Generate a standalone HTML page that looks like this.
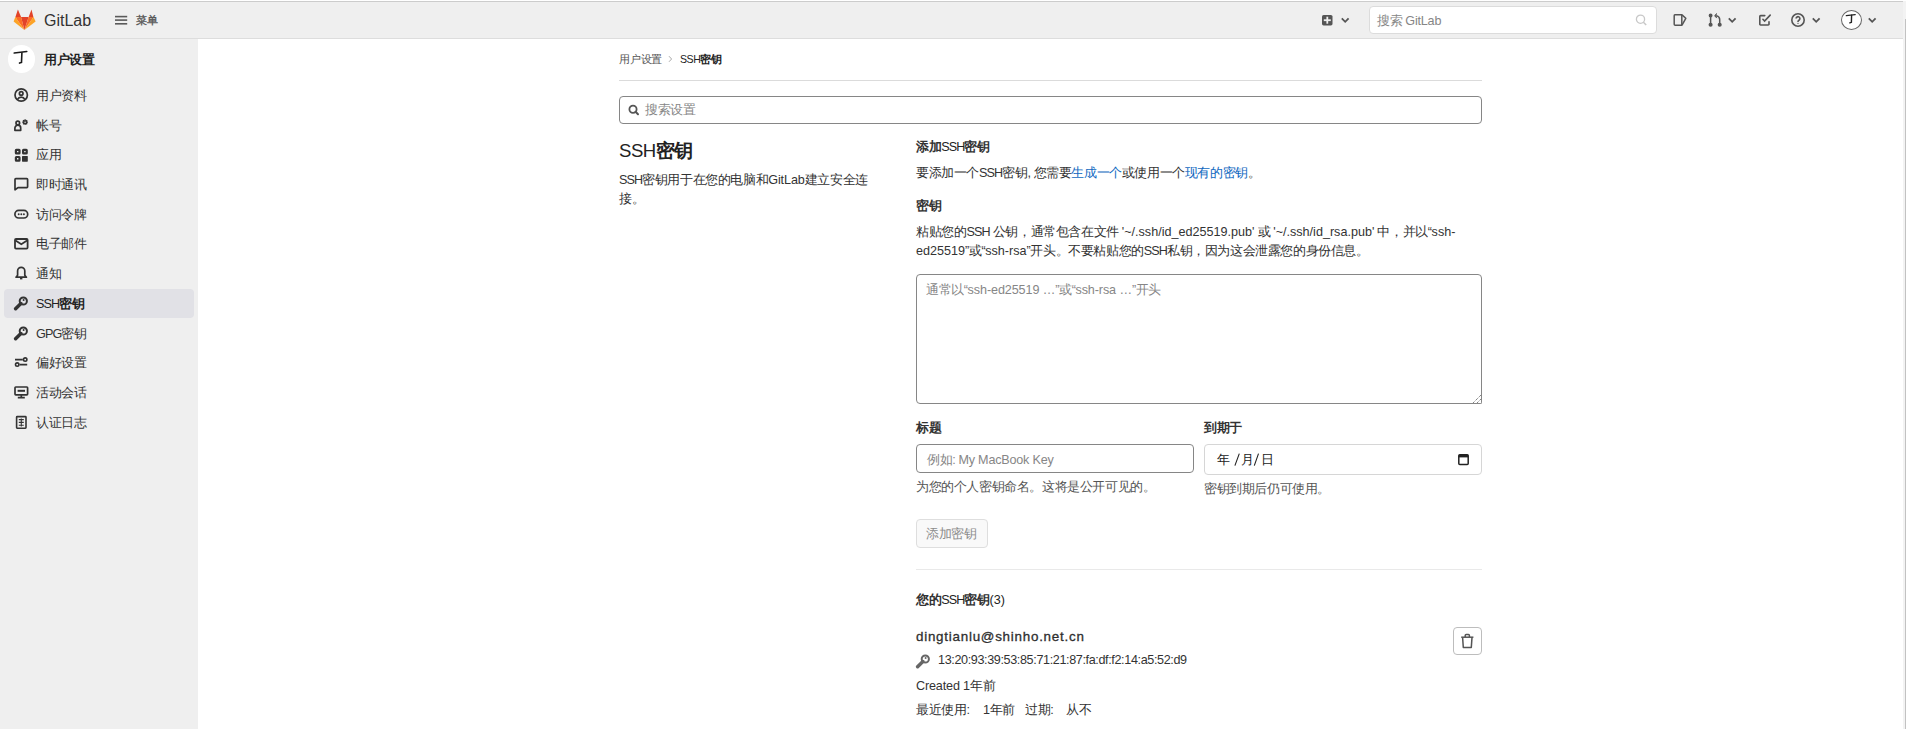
<!DOCTYPE html>
<html><head><meta charset="utf-8">
<style>
*{box-sizing:border-box;margin:0;padding:0}
html,body{width:1906px;height:729px;overflow:hidden;background:#fff}
body{font-family:"Liberation Sans",sans-serif;color:#303030;position:relative}
.a{position:absolute;white-space:nowrap}
svg{display:block}
#header{left:0;top:1px;width:1903px;height:38px;background:#efefef;border-bottom:1px solid #dddddd;border-top:1px solid #cccccc}
#sidebar{left:0;top:39px;width:198px;height:690px;background:#efefef}
.nav{left:4px;width:190px;height:29px;border-radius:4px}
.nav.act{background:#e1e1e6}
.nt{left:36px;font-size:12.6px;line-height:16px;color:#333;letter-spacing:-0.4px}
.t13{font-size:12.6px;line-height:19px;color:#333;letter-spacing:-0.4px}
.b{font-weight:bold}
.L{letter-spacing:-0.9px}
.l{letter-spacing:-0.1px}
.l0{letter-spacing:0}
.dt{top:451px;font-size:12.6px;line-height:18px;color:#222}
.lnk{color:#1068bf}
.inp{border:1px solid #868686;border-radius:4px;background:#fff}
.ph{color:#868686;font-size:12.6px;line-height:18px;letter-spacing:-0.4px}
.ic{fill:none;stroke:#333}
</style></head><body>
<div class="a" id="header"></div>
<!-- logo -->
<svg class="a" style="left:0;top:0" width="40" height="36" viewBox="0 0 40 36">
<path fill="#E24329" d="M15.4 17.1L17.9 9.4L21.1 17.1z"/>
<path fill="#E24329" d="M28.6 17.1L31.5 9.4L33.4 17.1z"/>
<path fill="#E24329" d="M21 17.1H28.7L24.4 29.9z"/>
<path fill="#FC6D26" d="M15.2 17.1H21.1L24.4 29.9z"/>
<path fill="#FC6D26" d="M33.6 17.1H28.6L24.4 29.9z"/>
<path fill="#FCA326" d="M15.3 17.1L13.6 21.6L24.4 29.9z"/>
<path fill="#FCA326" d="M33.5 17.1L35.6 21.6L24.4 29.9z"/>
</svg>
<div class="a" style="left:44px;top:11px;font-size:16px;line-height:20px;color:#333">GitLab</div>
<svg class="a" style="left:115px;top:15px" width="13" height="10" viewBox="0 0 13 10" fill="#5a5a5a"><rect x="0" y="0.8" width="12.2" height="1.6"/><rect x="0" y="4.3" width="12.2" height="1.6"/><rect x="0" y="8" width="12.2" height="1.6"/></svg>
<div class="a" style="left:136px;top:12px;font-size:10.6px;line-height:16px;color:#555;-webkit-text-stroke:0.35px #555">菜单</div>

<!-- header right -->
<svg class="a" style="left:1321px;top:14px" width="13" height="12" viewBox="0 0 13 12"><rect x="1" y="0.9" width="10.5" height="10.5" rx="1.6" fill="#555"/><rect x="5.4" y="2.7" width="1.8" height="7" fill="#efefef"/><rect x="2.8" y="5.3" width="7" height="1.8" fill="#efefef"/></svg>
<svg class="a" style="left:1340px;top:17px" width="10" height="7" viewBox="0 0 10 7"><path d="M1.8 1.4l3.4 3.4 3.4-3.4" stroke="#555" stroke-width="1.8" fill="none"/></svg>
<div class="a" style="left:1369px;top:6px;width:288px;height:28px;background:#fff;border:1px solid #dcdcdc;border-radius:4px"></div>
<div class="a" style="left:1377px;top:12.5px;font-size:12.6px;line-height:16px;color:#868686;letter-spacing:-0.4px">搜索 <span style="letter-spacing:-0.2px">GitLab</span></div>
<svg class="a" style="left:1634px;top:13px" width="14" height="14" viewBox="0 0 14 14"><circle cx="6.5" cy="6.2" r="4.1" stroke="#c8c8c8" stroke-width="1.3" fill="none"/><path d="M9.4 9.2l2.8 2.8" stroke="#c8c8c8" stroke-width="1.5"/></svg>
<!-- issues -->
<svg class="a" style="left:1672px;top:12px" width="16" height="16" viewBox="0 0 16 16" fill="none" stroke="#555" stroke-width="1.5" stroke-linejoin="round"><path d="M3 2.8h6.8v10.4H3.2A1 1 0 0 1 2.2 12.2V3.8A1 1 0 0 1 3 2.8z"/><path d="M10 2.9l3.8 3.4-3.8 6.9"/></svg>
<!-- MR -->
<svg class="a" style="left:1706px;top:12px" width="16" height="16" viewBox="0 0 16 16" fill="none" stroke="#555" stroke-width="1.5"><circle cx="4.6" cy="3.5" r="1.2" fill="#555"/><path d="M4.6 3.8v8.6"/><circle cx="4.6" cy="12.7" r="1.3" fill="#555"/><path d="M10.5 3.6c2.2.6 3.2 2 3.2 4v4.8"/><circle cx="13.7" cy="12.7" r="1.3" fill="#555"/><path d="M10.6 1.4l-1.9 2.5 2.1 2.2" fill="#555" stroke-width="1"/></svg>
<svg class="a" style="left:1727px;top:17px" width="10" height="7" viewBox="0 0 10 7"><path d="M1.8 1.4l3.4 3.4 3.4-3.4" stroke="#555" stroke-width="1.8" fill="none"/></svg>
<!-- todo -->
<svg class="a" style="left:1757px;top:12px" width="16" height="16" viewBox="0 0 16 16" fill="none" stroke="#555" stroke-width="1.6" stroke-linecap="round"><path d="M7.8 3.6H3.6a.8.8 0 0 0-.8.8v7.8a.8.8 0 0 0 .8.8h7.6a.8.8 0 0 0 .8-.8V9.7"/><path d="M5.9 7.3l1.7 1.8 5.6-6"/></svg>
<!-- help -->
<svg class="a" style="left:1790px;top:12px" width="16" height="16" viewBox="0 0 16 16" fill="none" stroke="#555" stroke-width="1.6"><circle cx="8" cy="8" r="6.2"/><path d="M6.1 6.6a1.9 1.9 0 1 1 2.9 1.6c-.6.4-1 .8-1 1.5v.2"/><circle cx="8" cy="11.4" r=".6" fill="#555" stroke="none"/></svg>
<svg class="a" style="left:1811px;top:17px" width="10" height="7" viewBox="0 0 10 7"><path d="M1.8 1.4l3.4 3.4 3.4-3.4" stroke="#555" stroke-width="1.8" fill="none"/></svg>
<!-- avatar -->
<div class="a" style="left:1841px;top:10px;width:21px;height:20px;border-radius:50%;border:1px solid #666;background:#fff"></div>
<svg class="a" style="left:1841px;top:10px" width="21" height="20" viewBox="1841 10 21 20" fill="none" stroke="#222" stroke-linecap="round"><path d="M1846.3 15.6L1855.2 14.6" stroke-width="1.3"/><path d="M1851.6 15.3L1851.4 22.3L1849.8 22.9" stroke-width="1.4"/></svg>
<svg class="a" style="left:1867px;top:17px" width="10" height="7" viewBox="0 0 10 7"><path d="M1.8 1.4l3.4 3.4 3.4-3.4" stroke="#555" stroke-width="1.8" fill="none"/></svg>
<!-- scrollbar edge -->
<div class="a" style="left:1903px;top:1px;width:3px;height:728px;background:#f3f3f3"></div>
<div class="a" style="left:1905px;top:19px;width:1px;height:710px;background:#c2c2c2"></div>
<div class="a" id="sidebar"></div>
<div class="a" style="left:7.6px;top:45.2px;width:27.8px;height:28px;border-radius:50%;background:#fff"></div>
<svg class="a" style="left:0;top:40px" width="40" height="36" viewBox="0 40 40 36" fill="none" stroke="#1a1a1a" stroke-linecap="round"><path d="M14.2 53.1L26.8 51.6" stroke-width="1.5"/><path d="M21.9 52.8L21.5 62.4L19.5 63.1" stroke-width="1.6"/></svg>
<div class="a b" style="left:44px;top:52px;font-size:12.6px;line-height:16px;color:#222;letter-spacing:-0.4px">用户设置</div>
<div class="a nav act" style="top:289px"></div>
<!-- nav icons -->
<svg class="a" style="left:13px;top:87px" width="16" height="16" viewBox="0 0 16 16" class="ic" fill="none" stroke="#333" stroke-width="1.7"><circle cx="8.2" cy="8" r="6.2"/><circle cx="8.2" cy="6.4" r="1.8"/><path d="M4.6 12.4c.7-1.5 2-2.3 3.6-2.3s2.9.8 3.6 2.3"/></svg>
<svg class="a" style="left:13px;top:117px" width="16" height="16" viewBox="0 0 16 16" fill="none" stroke="#333" stroke-width="1.7"><circle cx="4.8" cy="6" r="1.8"/><path d="M1.9 13.3v-2.2a2.9 2.9 0 0 1 5.8 0v2.2z" stroke-linejoin="round"/><g transform="translate(0 .9)"><circle cx="12.1" cy="4.3" r="1.9" fill="#333" stroke="none"/><circle cx="12.1" cy="4.3" r=".7" fill="#efefef" stroke="none"/><path d="M12.1 1.4v5.8M9.2 4.3h5.8M10.05 2.25l4.1 4.1M14.15 2.25l-4.1 4.1" stroke-width="1.3"/><circle cx="12.1" cy="4.3" r=".7" fill="#efefef" stroke="none"/></g></svg>
<svg class="a" style="left:13px;top:147px" width="16" height="16" viewBox="0 0 16 16" fill="none" stroke="#333" stroke-width="2.2"><rect x="2.9" y="2.8" width="3.6" height="3.6" rx=".4"/><rect x="10.1" y="2.8" width="3.6" height="3.6" rx=".4"/><rect x="2.9" y="10" width="3.6" height="3.6" rx=".4"/><rect x="9" y="8.9" width="5.8" height="5.8" rx=".6" fill="#333" stroke="none"/></svg>
<svg class="a" style="left:13px;top:176px" width="16" height="16" viewBox="0 0 16 16" fill="none" stroke="#333" stroke-width="1.7" stroke-linejoin="round"><path d="M2 13.8V3.4a.8.8 0 0 1 .8-.8h11a.8.8 0 0 1 .8.8v7.4a.8.8 0 0 1-.8.8H5z"/></svg>
<svg class="a" style="left:13px;top:206px" width="16" height="16" viewBox="0 0 16 16" fill="none" stroke="#333" stroke-width="1.7"><rect x="1.9" y="4.4" width="12.8" height="7.6" rx="3.8"/><circle cx="5.7" cy="8.2" r=".95" fill="#333" stroke="none"/><circle cx="8.3" cy="8.2" r=".95" fill="#333" stroke="none"/><circle cx="10.9" cy="8.2" r=".95" fill="#333" stroke="none"/></svg>
<svg class="a" style="left:13px;top:236px" width="16" height="16" viewBox="0 0 16 16" fill="none" stroke="#333" stroke-width="1.8"><rect x="2" y="3" width="12.6" height="9.6" rx="1"/><path d="M2.5 4.5L8.3 8.2l5.8-3.7"/></svg>
<svg class="a" style="left:13px;top:265px" width="16" height="16" viewBox="0 0 16 16" fill="none" stroke="#333" stroke-width="1.7" stroke-linejoin="round"><path d="M8.2 2.4a3.6 3.6 0 0 0-3.6 3.6v4.2l-1.6 2h10.4l-1.6-2V6a3.6 3.6 0 0 0-3.6-3.6z"/><path d="M7 13.6h2.4" stroke-width="1.6"/></svg>
<svg class="a" style="left:13px;top:295px" width="16" height="16" viewBox="0 0 16 16" fill="none" stroke="#333" stroke-width="1.8"><circle cx="10.3" cy="6" r="3.6" stroke-width="2"/><circle cx="10.6" cy="5" r="1" fill="#333" stroke="none"/><path d="M7.9 8.5L2.6 13.8" stroke-width="3.4" stroke-linecap="round"/></svg>
<svg class="a" style="left:13px;top:325px" width="16" height="16" viewBox="0 0 16 16" fill="none" stroke="#333" stroke-width="1.8"><circle cx="10.3" cy="6" r="3.6" stroke-width="2"/><circle cx="10.6" cy="5" r="1" fill="#333" stroke="none"/><path d="M7.9 8.5L2.6 13.8" stroke-width="3.4" stroke-linecap="round"/></svg>
<svg class="a" style="left:13px;top:354px" width="16" height="16" viewBox="0 0 16 16" fill="none" stroke="#333" stroke-width="1.6"><path d="M2 5.6h7.8M6.6 10.6h7.6"/><circle cx="12.2" cy="5.6" r="1.7"/><circle cx="4.2" cy="10.6" r="1.7"/></svg>
<svg class="a" style="left:13px;top:384px" width="16" height="16" viewBox="0 0 16 16" fill="none" stroke="#333" stroke-width="1.7"><rect x="2" y="3" width="12.6" height="7.8" rx=".8"/><rect x="4.6" y="5.8" width="7.4" height="2" fill="#333" stroke="none"/><path d="M8.3 10.8v2.4M4.8 13.6h7"/></svg>
<svg class="a" style="left:13px;top:414px" width="16" height="16" viewBox="0 0 16 16" fill="none" stroke="#333" stroke-width="1.6"><rect x="3.6" y="2.6" width="9.4" height="11.6" rx=".6"/><path d="M5.8 5.6h5M5.8 8.4h5M5.8 11.2h5M8.3 4.4v8" stroke-width="1.1"/></svg>
<!-- nav text -->
<div class="a nt" style="top:88px">用户资料</div>
<div class="a nt" style="top:118px">帐号</div>
<div class="a nt" style="top:147px">应用</div>
<div class="a nt" style="top:177px">即时通讯</div>
<div class="a nt" style="top:207px">访问令牌</div>
<div class="a nt" style="top:236px">电子邮件</div>
<div class="a nt" style="top:266px">通知</div>
<div class="a nt" style="top:296px;color:#222"><span class="L">SSH</span><b>密钥</b></div>
<div class="a nt" style="top:326px"><span class="L">GPG</span>密钥</div>
<div class="a nt" style="top:355px">偏好设置</div>
<div class="a nt" style="top:385px">活动会话</div>
<div class="a nt" style="top:415px">认证日志</div>
<!-- main -->
<div class="a" style="left:619px;top:51px;font-size:10.6px;line-height:16px;color:#555;letter-spacing:-0.2px">用户设置</div>
<svg class="a" style="left:667px;top:55px" width="7" height="8" viewBox="0 0 7 8"><path d="M2 1.2l2.6 2.8L2 6.8" stroke="#aaa" stroke-width="1" fill="none"/></svg>
<div class="a" style="left:680px;top:51px;font-size:10.6px;line-height:16px;color:#222;letter-spacing:-0.2px"><span style="letter-spacing:-0.5px">SSH</span><b>密钥</b></div>
<div class="a" style="left:619px;top:80px;width:863px;height:1px;background:#dbdbdb"></div>
<div class="a inp" style="left:619px;top:96px;width:863px;height:28px"></div>
<svg class="a" style="left:627px;top:103px" width="14" height="14" viewBox="0 0 14 14"><circle cx="6" cy="6.2" r="3.6" stroke="#555" stroke-width="1.8" fill="none"/><path d="M8.6 8.8l2.4 2.4" stroke="#555" stroke-width="2" stroke-linecap="round"/></svg>
<div class="a ph" style="left:645px;top:101px">搜索设置</div>

<div class="a b" style="left:619px;top:139px;font-size:18.6px;line-height:24px;color:#222;letter-spacing:-0.3px"><span style="letter-spacing:-0.5px;font-weight:normal">SSH</span>密钥</div>
<div class="a t13" style="left:619px;top:171px"><span class="L">SSH</span>密钥用于在您的电脑和<span class="l">GitLab</span>建立安全连</div>
<div class="a t13" style="left:619px;top:190px">接。</div>

<div class="a t13 b" style="left:916px;top:138px">添加<span class="L" style="font-weight:normal;color:#222">SSH</span>密钥</div>
<div class="a t13" style="left:916px;top:164px">要添加一个<span class="L">SSH</span>密钥, 您需要<span class="lnk">生成一个</span>或使用一个<span class="lnk">现有的密钥</span>。</div>
<div class="a t13 b" style="left:916px;top:197px">密钥</div>
<div class="a t13" style="left:916px;top:223px">粘贴您的<span class="L">SSH</span> 公钥，通常包含在文件 <span class="l0">'~/.ssh/id_ed25519.pub'</span> 或 <span class="l0">'~/.ssh/id_rsa.pub'</span> 中，并以“<span class="l0">ssh-</span></div>
<div class="a t13" style="left:916px;top:242px"><span class="l0">ed25519</span>”或“<span class="l0">ssh-rsa</span>”开头。不要粘贴您的<span class="L">SSH</span>私钥，因为这会泄露您的身份信息。</div>

<div class="a inp" style="left:916px;top:274px;width:566px;height:130px"></div>
<div class="a" style="left:1470px;top:391px;width:12px;height:13px;background:#fff;border-right:1px solid #868686;border-bottom:1px solid #868686;border-bottom-right-radius:2px"></div><svg class="a" style="left:1466px;top:390px" width="16" height="14" viewBox="1466 390 16 14" stroke="#555" stroke-width="1" stroke-dasharray="1 1"><path d="M1473.2 402.8L1481.3 394.7M1477.2 402.8L1481.3 398.7"/></svg>
<div class="a ph" style="left:926px;top:281px">通常以“<span class="l">ssh-ed25519 …</span>”或“<span class="l">ssh-rsa …</span>”开头</div>

<div class="a t13 b" style="left:916px;top:419px">标题</div>
<div class="a t13 b" style="left:1204px;top:419px">到期于</div>
<div class="a inp" style="left:916px;top:444px;width:278px;height:29px"></div>
<div class="a ph" style="left:927px;top:451px">例如: <span style="letter-spacing:-0.2px">My MacBook Key</span></div>
<div class="a" style="left:1204px;top:444px;width:278px;height:31px;border:1px solid #d6d6d6;border-radius:4px;background:#fff"></div>
<div class="a dt" style="left:1217px">年</div><svg class="a" style="left:1230px;top:450px" width="40" height="20" viewBox="1230 450 40 20" stroke="#222" stroke-width="1.1"><path d="M1234.9 465.6L1239.3 453.6M1254.3 465.6L1258.5 453.6"/></svg><div class="a dt" style="left:1241px">月</div><div class="a dt" style="left:1260.5px">日</div>
<svg class="a" style="left:1457px;top:452px" width="13" height="14" viewBox="0 0 13 14"><rect x="1.8" y="2.8" width="9.4" height="9.6" rx="1" stroke="#222" stroke-width="1.5" fill="none"/><rect x="1.8" y="2.8" width="9.4" height="2.6" fill="#222"/></svg>
<div class="a t13" style="left:916px;top:478px;color:#555">为您的个人密钥命名。这将是公开可见的。</div>
<div class="a t13" style="left:1204px;top:480px;color:#555">密钥到期后仍可使用。</div>

<div class="a" style="left:916px;top:519px;width:72px;height:29px;border:1px solid #dedede;border-radius:4px;background:#f9f9f9"></div>
<div class="a" style="left:926px;top:525px;font-size:12.6px;line-height:18px;color:#8d8d8d;letter-spacing:-0.4px">添加密钥</div>

<div class="a" style="left:916px;top:569px;width:566px;height:1px;background:#e9e9e9"></div>
<div class="a t13 b" style="left:916px;top:591px">您的<span style="font-weight:normal;color:#222;letter-spacing:-0.9px">SSH</span>密钥<span style="font-weight:normal;color:#222;letter-spacing:0">(3)</span></div>

<div class="a" style="left:916px;top:627px;font-size:13.4px;line-height:19px;color:#2e2e2e;letter-spacing:0.75px;-webkit-text-stroke:0.3px #2e2e2e">dingtianlu@shinho.net.cn</div>
<div class="a" style="left:1453px;top:627px;width:29px;height:28px;border:1px solid #bdbdbd;border-radius:4px;background:#fff"></div>
<svg class="a" style="left:1460px;top:633px" width="15" height="16" viewBox="0 0 15 16" fill="none" stroke="#555" stroke-width="1.5" stroke-linejoin="round"><path d="M1.2 4.2h12.2"/><path d="M5.2 4V2.6a1 1 0 0 1 1-1h2.2a1 1 0 0 1 1 1V4"/><path d="M2.6 4.4l.7 10h8l.7-10"/></svg>
<svg class="a" style="left:915px;top:653px" width="16" height="16" viewBox="0 0 16 16" fill="none" stroke="#666" stroke-width="1.8"><circle cx="10.3" cy="6" r="3.6" stroke-width="2"/><circle cx="10.6" cy="5" r="1" fill="#666" stroke="none"/><path d="M7.9 8.5L2.6 13.8" stroke-width="3.4" stroke-linecap="round"/></svg>
<div class="a t13" style="left:938px;top:651px"><span style="letter-spacing:-0.37px">13:20:93:39:53:85:71:21:87:fa:df:f2:14:a5:52:d9</span></div>
<div class="a t13" style="left:916px;top:677px"><span style="letter-spacing:-0.15px">Created 1</span>年前</div>
<div class="a t13" style="left:916px;top:701px">最近使用:</div><div class="a t13" style="left:983px;top:701px">1年前</div><div class="a t13" style="left:1025px;top:701px">过期:</div><div class="a t13" style="left:1066px;top:701px">从不</div>
</body></html>
